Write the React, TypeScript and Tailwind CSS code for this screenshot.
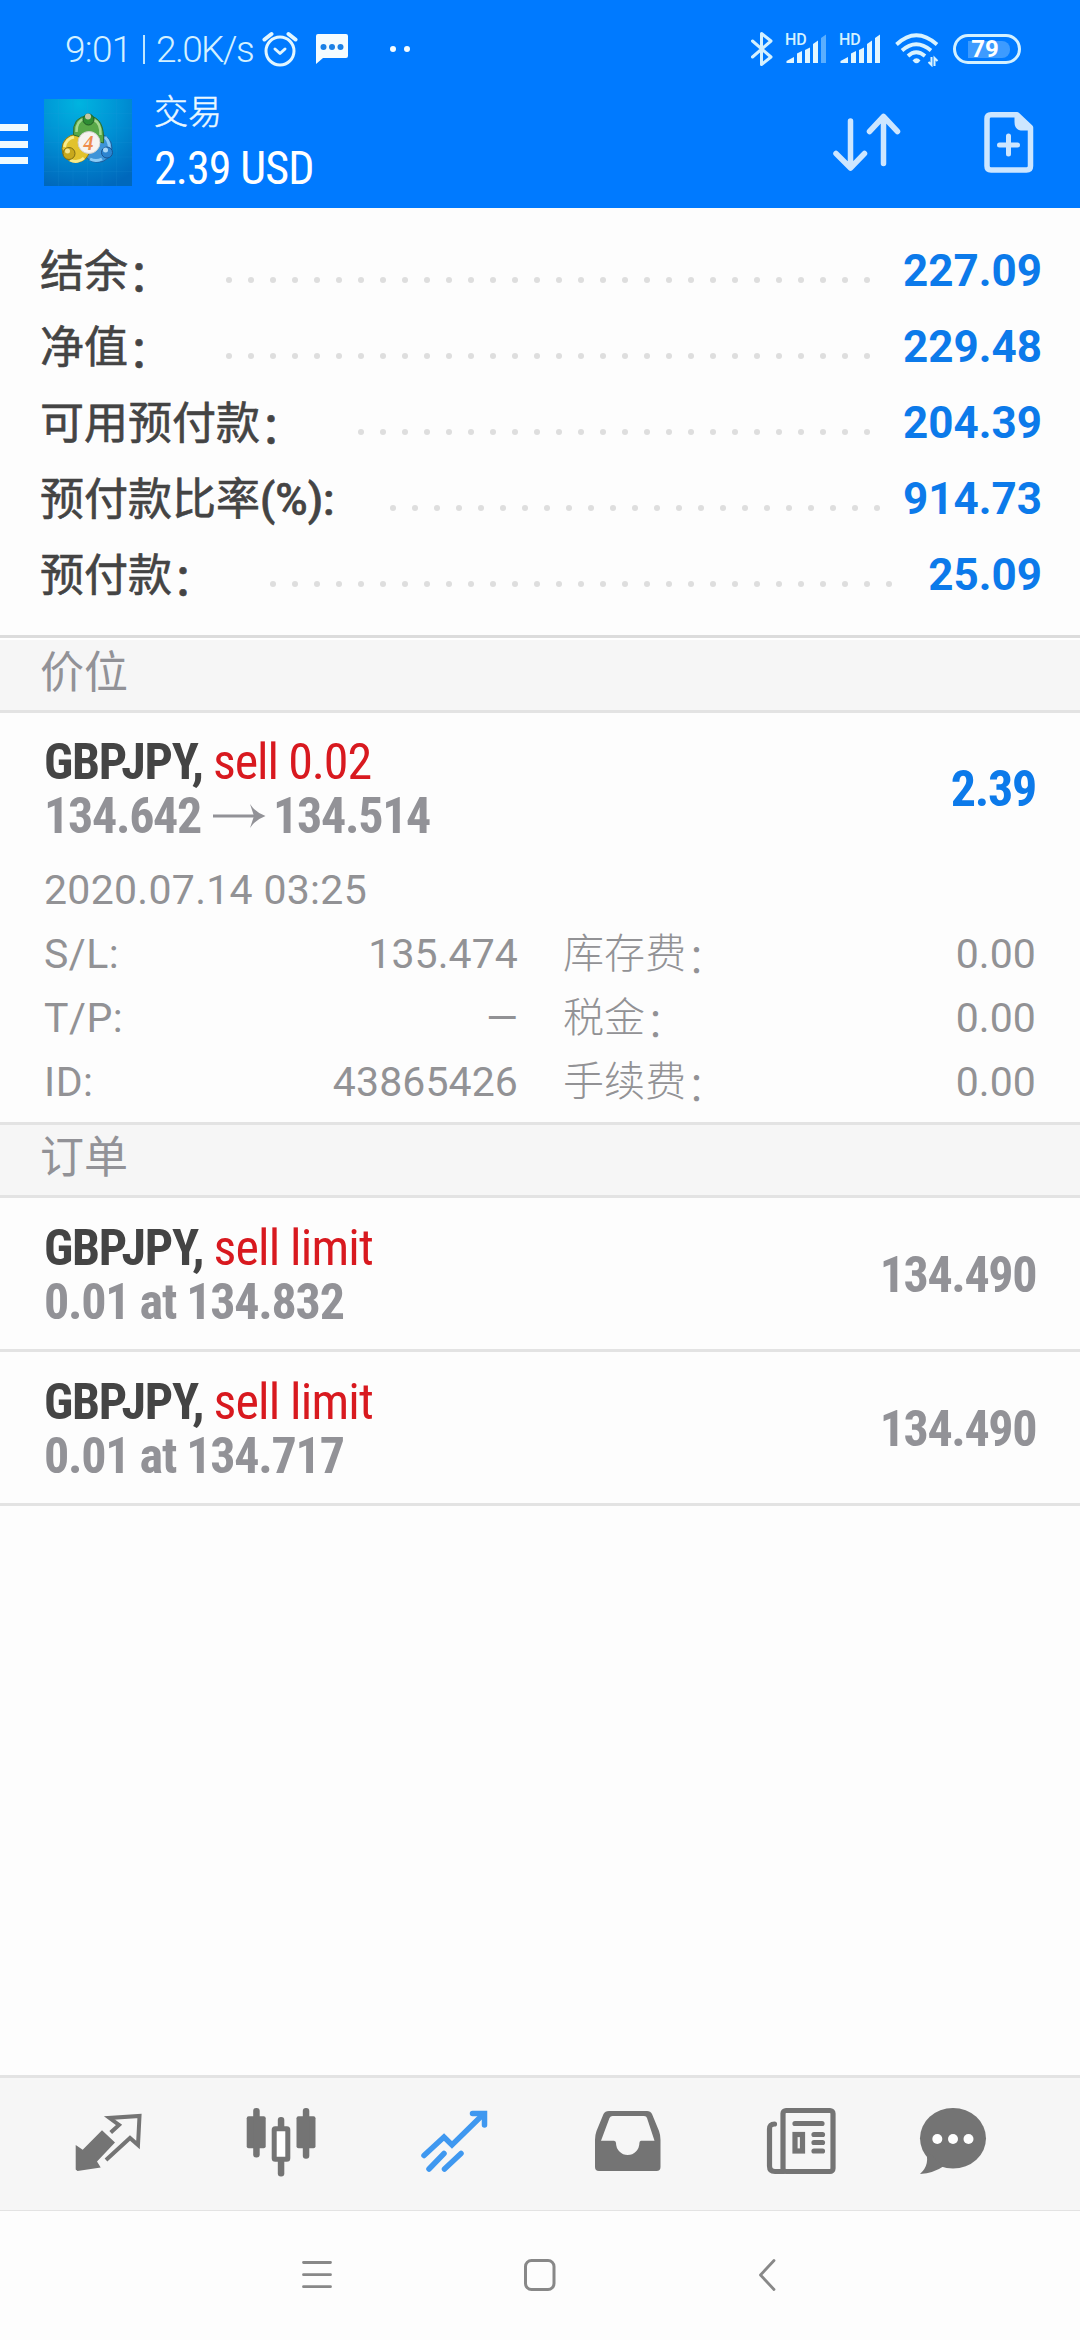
import React from "react";

const accountRows = [
  { label: "结余", value: "227.09", dots: 30, width: "w-[172px]" },
  { label: "净值", value: "229.48", dots: 30, width: "w-[172px]" },
  { label: "可用预付款", value: "204.39", dots: 24, width: "w-[172px]" },
  { label: "预付款比率", unit: "(%):", value: "914.73", dots: 23, width: "w-[162px]" },
  { label: "预付款", value: "25.09", dots: 29, width: "w-[150px]" },
];

const details = [
  { left: "S/L:", leftValue: "135.474", right: "库存费", rightValue: "0.00" },
  { left: "T/P:", leftValue: "—", right: "税金", rightValue: "0.00" },
  { left: "ID:", leftValue: "43865426", right: "手续费", rightValue: "0.00" },
];

const orders = [
  { symbol: "GBPJPY,", type: "sell limit", info: "0.01 at 134.832", price: "134.490" },
  { symbol: "GBPJPY,", type: "sell limit", info: "0.01 at 134.717", price: "134.490" },
];

function AlarmIcon() {
  return (
    <svg className="w-[36px] h-[36px] ml-[8px]" viewBox="0 0 36 36" fill="none" stroke="#e2f6ff" strokeWidth="3" strokeLinecap="round" strokeLinejoin="round">
      <circle cx="18" cy="20" r="14" />
      <path d="M2.500 8.500L9.500 3M33.500 8.500L26.500 3" strokeWidth="4" />
      <path d="M13 18l5 4.500l5-4.500" />
    </svg>
  );
}

function MessageIcon() {
  return (
    <svg className="w-[34px] h-[34px] ml-[17px]" viewBox="0 0 34 34">
      <path d="M3 2h28a2 2 0 0 1 2 2v20a2 2 0 0 1-2 2H8l-7 6V4a2 2 0 0 1 2-2z" fill="#f4fcff" />
      <g fill="#1a80e6">
        <circle cx="8.500" cy="15" r="3" />
        <circle cx="17" cy="15" r="3" />
        <circle cx="25.500" cy="15" r="3" />
      </g>
    </svg>
  );
}

function BluetoothIcon() {
  return (
    <svg className="w-[22px] h-[36px]" viewBox="0 0 22 36" fill="none" stroke="#d4f1ff" strokeWidth="3" strokeLinejoin="round" strokeLinecap="round">
      <path d="M1.500 10L20 26L10.500 33.500V2.500L20 10L1.500 26" />
    </svg>
  );
}

function SignalIcon({ last }: { last: string }) {
  return (
    <div className="relative w-[42px] h-[36px]">
      <span className="absolute left-0 top-[2px] text-[16px] leading-[14px] font-medium text-[#d4f1ff]">HD</span>
      <svg className="w-[42px] h-[36px]" viewBox="0 0 42 36" fill="#e2f6ff">
        <path d="M1.500 32V30L9 26V32z" />
        <path d="M12 32V22.500L17 20V32z" />
        <path d="M20 32V19L25 16.500V32z" />
        <path d="M28 32V13L33 9.500V32z" />
        <path d="M36 32V7L41 3.500V32z" fill={last} />
      </svg>
    </div>
  );
}

function WifiIcon() {
  return (
    <svg className="w-[44px] h-[36px] ml-[14px]" viewBox="0 0 44 36" fill="none" stroke="#d9f3ff" strokeWidth="3.800">
      <path d="M1.500 13.500Q21 -5 42 13.500" />
      <path d="M7 19.500Q21 7 36 19.500" />
      <path d="M13 25Q21 17.500 30 25" />
      <path d="M17.500 29.500Q21.500 25 25.500 29.500Q21.500 35 17.500 29.500z" fill="#d9f3ff" stroke="none" />
      <path d="M36.500 26V34L33.500 31M39.500 35V27L42.500 30" strokeWidth="2" />
    </svg>
  );
}

function StatusBar() {
  return (
    <div className="flex items-center h-[34px] pl-[65px] pr-[59px] text-[#d4f1ff]">
      <span className="w-[66px] text-[37px] leading-none font-light tracking-[-0.700px]">9:01</span>
      <div className="w-[2px] h-[29px] ml-[12px] bg-[#bfe6ff]"></div>
      <span className="w-[98px] ml-[11px] text-[37px] leading-none font-light tracking-[-1.600px] whitespace-nowrap">2.0K/s</span>
      <AlarmIcon />
      <MessageIcon />
      <div className="flex gap-[8px] ml-[41px]">
        <div className="w-[6px] h-[6px] rounded-full bg-[#f4fcff]"></div>
        <div className="w-[6px] h-[6px] rounded-full bg-[#f4fcff]"></div>
      </div>
      <div className="flex items-center ml-auto">
        <BluetoothIcon />
        <div className="flex gap-[12px] ml-[12px]">
          <SignalIcon last="#5aaeff" />
          <SignalIcon last="#e2f6ff" />
        </div>
        <WifiIcon />
        <div className="flex items-center justify-center w-[68px] h-[30px] ml-[14px] rounded-full border-[3px] border-[#d4f1ff]">
          <div className="flex items-center justify-center w-[42px] h-[17px] ml-[3px] rounded-r-[8px] bg-[#3d9bff]">
            <span className="pr-[7px] text-[24px] leading-none font-bold text-white">79</span>
          </div>
        </div>
      </div>
    </div>
  );
}

function AppLogo() {
  return (
    <svg className="w-[88px] h-[87px]" viewBox="0 0 88 87">
      <defs>
        <radialGradient id="logoBg" cx="0.4" cy="0.05" r="1">
          <stop offset="0" stopColor="#00b4e0" />
          <stop offset="0.5" stopColor="#0090d4" />
          <stop offset="1" stopColor="#0068bc" />
        </radialGradient>
      </defs>
      <rect width="88" height="87" fill="url(#logoBg)" />
      <path d="M0 14.500H88M0 29H88M0 43.500H88M0 58H88M0 72.500H88M14.500 0V87M29 0V87M43.500 0V87M58 0V87M72.500 0V87" stroke="#2a9fe0" strokeOpacity="0.12" strokeWidth="1" />
      <circle cx="53.500" cy="49" r="14.500" fill="#3d94d8" stroke="#1d5f9e" strokeWidth="1" />
      <path d="M61 38A14 14 0 0 1 64 54M58 60A13 13 0 0 1 46 60" fill="none" stroke="#8ccbf5" strokeWidth="3" />
      <circle cx="32" cy="49.500" r="14" fill="#e2c22c" stroke="#8a7a1c" strokeWidth="1" />
      <path d="M20.500 48A12 12 0 0 1 30 38M26 61A12 12 0 0 0 40 59" fill="none" stroke="#f8ec8c" strokeWidth="3" />
      <path d="M29.500 36Q28 17 44.500 17Q61 18 59.500 44L44 40z" fill="#58a848" stroke="#2c6c30" strokeWidth="1" />
      <path d="M32.500 33Q32 22 41 19.500M56.500 36Q57 24 50 21" fill="none" stroke="#a4d890" strokeWidth="2.500" />
      <circle cx="44.500" cy="20.500" r="5.500" fill="#2e8c34" stroke="#225c26" />
      <circle cx="44" cy="17.500" r="3" fill="#c4c8a4" />
      <circle cx="25" cy="54.500" r="6" fill="#c8a81c" stroke="#7c6c14" />
      <circle cx="23.500" cy="52" r="2.500" fill="#f4e48c" />
      <circle cx="63" cy="53.500" r="5.500" fill="#2c84d0" stroke="#1a5490" />
      <circle cx="61.500" cy="51" r="2.500" fill="#a8d8f8" />
      <circle cx="45" cy="43.500" r="11" fill="#f6f3f0" stroke="#d0d0cc" strokeWidth="1" />
      <text x="44.500" y="50.500" textAnchor="middle" fontSize="20" fill="#ee8c4c" className="font-['Liberation_Serif'] italic font-bold">4</text>
    </svg>
  );
}

function SortIcon() {
  return (
    <svg className="w-[68px] h-[62px]" viewBox="0 0 68 62" fill="none" stroke="#cde6ff" strokeWidth="5.500" strokeLinecap="round" strokeLinejoin="round">
      <path d="M17.500 10V57M3 42.500L17.500 57L31.500 42.500" />
      <path d="M50.500 52.500V5.500M36.500 20.500L50.500 5.500L64.500 20.500" />
    </svg>
  );
}

function NewOrderIcon() {
  return (
    <svg className="w-[50px] h-[61px]" viewBox="0 0 50 61" fill="none" stroke="#cde6ff" strokeWidth="5.500" strokeLinecap="round" strokeLinejoin="round">
      <path d="M7 2.800H33L46.500 15.500V54Q46.500 58 42.500 58H7Q3 58 3 54V6.800Q3 2.800 7 2.800z" />
      <path d="M32 4V10Q32 17 39 17H45z" fill="#cde6ff" strokeWidth="3" />
      <path d="M24.500 24V42M15.500 33H33.500" strokeWidth="5" />
    </svg>
  );
}

function Header() {
  return (
    <header className="h-[208px] pt-[32px] bg-[#007aff]">
      <StatusBar />
      <div className="flex items-start pt-[26px] pr-[46px]">
        <div className="flex flex-col gap-[9.500px] w-[28px] pt-[32px]">
          <div className="h-[7px] bg-[#eefaff]"></div>
          <div className="h-[7px] bg-[#eefaff]"></div>
          <div className="h-[7px] bg-[#eefaff]"></div>
        </div>
        <div className="pt-[7px] pl-[16px]">
          <AppLogo />
        </div>
        <div className="pl-[22px] text-[#eaf8ff]">
          <h1 className="text-[34px] leading-[40px] font-light [-webkit-text-stroke:0.5px]">交易</h1>
          <h2 className="font-['Roboto_Condensed'] text-[46px] leading-[72px] font-[450] tracking-[-0.900px] text-white">2.39 USD</h2>
        </div>
        <div className="flex items-center gap-[83px] ml-auto pt-[19px]">
          <SortIcon />
          <NewOrderIcon />
        </div>
      </div>
    </header>
  );
}

function AccountSummary() {
  return (
    <div className="pt-[25px] pb-[22px] pl-[40px] pr-[38px] border-b-[3px] border-[#dcdcdc] text-[44px] leading-none">
      {accountRows.map((row) => (
        <div key={row.label} className="flex items-center h-[76px]">
          <div className="flex-1 pt-[2px] text-[#444444] whitespace-nowrap [-webkit-text-stroke:0.6px]">
            {row.label}
            {row.unit ? <span className="font-medium">{row.unit}</span> : <span className="align-[-5px] leading-[0]">：</span>}
          </div>
          <div className="flex gap-[16px] pt-[18px]">
            {Array.from({ length: row.dots }, (_, i) => (
              <div key={i} className="w-[6px] h-[6px] rounded-full bg-[#dedede]"></div>
            ))}
          </div>
          <span className={"text-right font-bold text-[#0c7aea] " + row.width}>{row.value}</span>
        </div>
      ))}
    </div>
  );
}

function SectionTitle({ title }: { title: string }) {
  return (
    <div className="flex items-center h-[73px] pb-[4px] pl-[40px] bg-[#f6f6f6] border-b-[3px] border-[#e3e3e3] text-[44px] leading-none text-[#929297]">
      {title}
    </div>
  );
}

function Position() {
  return (
    <div className="pt-[22px] pb-[8px] pl-[44px] pr-[44px] border-b-[3px] border-[#e3e3e3]">
      <div className="flex items-center justify-between font-['Roboto_Condensed'] text-[50px] leading-[54px] font-bold tracking-[-1.300px]">
        <div>
          <h2 className="text-[#444444]">
            GBPJPY, <span className="font-normal tracking-[-1.100px] text-[#d8191f]">sell 0.02</span>
          </h2>
          <div className="flex items-center text-[#929297]">
            <span>134.642</span>
            <svg className="w-[54px] h-[26px] ml-[11px] mr-[7px]" viewBox="0 0 54 26">
              <path d="M1 13H44" stroke="#929297" strokeWidth="3" />
              <path d="M38 1Q43 9 53.500 13Q43 17 38 25L42 13z" fill="#929297" />
            </svg>
            <span>134.514</span>
          </div>
        </div>
        <h2 className="text-[#0c7aea]">2.39</h2>
      </div>
      <div className="pt-[15px] text-[41px] leading-[64px] font-[380] tracking-[0.100px] text-[#929295]">
        <p className="tracking-[0.300px]">2020.07.14 03:25</p>
        {details.map((item) => (
          <div key={item.left} className="flex">
            <span className="w-[100px] tracking-[0.500px]">{item.left}</span>
            <span className="w-[374px] text-right">{item.leftValue}</span>
            <span className="pl-[45px] font-light">
              {item.right}
              <span className="align-[-5px] leading-[0]">：</span>
            </span>
            <span className="ml-auto">{item.rightValue}</span>
          </div>
        ))}
      </div>
    </div>
  );
}

function Orders() {
  return (
    <div>
      {orders.map((order) => (
        <div key={order.info} className="flex items-center justify-between h-[154px] pt-[2px] pl-[44px] pr-[44px] border-b-[3px] border-[#e3e3e3] font-['Roboto_Condensed'] text-[50px] leading-[54px] font-bold tracking-[-1.250px] text-[#929297]">
          <div>
            <h2 className="text-[#444444]">
              {order.symbol} <span className="font-normal tracking-[-0.800px] text-[#d8191f]">{order.type}</span>
            </h2>
            <p>{order.info}</p>
          </div>
          <h2 className="tracking-[-1.400px]">{order.price}</h2>
        </div>
      ))}
    </div>
  );
}

function TabBar() {
  return (
    <div className="flex gap-[101px] h-[136px] pt-[28px] pl-[72px] bg-[#f6f6f6] border-t-[3px] border-b border-t-[#e3e3e3] border-b-[#e3e3e3]">
      {/* quotes */}
      <svg className="w-[72px] h-[72px]" viewBox="0 0 72 72">
        <path d="M30 24.300L43 36.500L25 55.500L28.700 61.500L5.500 65L3.700 63.500V39L10.700 43.700z" fill="#747474" />
        <path d="M38.700 26.500L47 19L37.500 12L67.500 10L66 39L58 32L34 54" fill="none" stroke="#747474" strokeWidth="4" />
      </svg>
      {/* chart */}
      <svg className="w-[72px] h-[72px]" viewBox="0 0 72 72" fill="#747474">
        <rect x="1.700" y="10.300" width="19" height="32" rx="2" />
        <rect x="8.200" y="2" width="6.500" height="49.500" rx="3" />
        <rect x="51.500" y="10.300" width="19" height="32" rx="2" />
        <rect x="57.800" y="2" width="6.500" height="50.700" rx="3" />
        <rect x="32.800" y="11" width="6.500" height="59.500" rx="3" />
        <rect x="29.200" y="22.800" width="13.600" height="30.400" rx="1" fill="#ffffff" stroke="#747474" strokeWidth="5" />
      </svg>
      {/* trade */}
      <svg className="w-[72px] h-[72px]" viewBox="0 0 72 72" fill="none" stroke="#3f98f0" strokeWidth="5.500" strokeLinecap="round">
        <path d="M6 49.500L26 31L34 39L65 8.500" />
        <path d="M54.500 7.500H66.500V19" />
        <path d="M11 63L26 47.500M26.500 63L43 47.500" />
      </svg>
      {/* history */}
      <svg className="w-[72px] h-[72px] ml-px" viewBox="0 0 72 72">
        <path fillRule="evenodd" fill="#747474" d="M17 5H55Q58.500 5 60 8L67 25Q68.500 29 68.500 34V61Q68.500 65 64.500 65H7Q3 65 3 61V34Q3 29 4.500 25L11.500 8Q13 5 17 5zM20.500 10Q18.500 10 17.500 12L9 34.700H22Q24 35 24 37A11.700 12 0 0 0 47.400 37Q47.400 35 49 34.700H62.500L55 12Q54.500 10 52 10z" />
      </svg>
      {/* news */}
      <svg className="w-[72px] h-[72px]" viewBox="0 0 72 72" fill="none" stroke="#747474" strokeWidth="5.200" strokeLinecap="round">
        <rect x="18" y="4.500" width="50" height="61" rx="3" />
        <path d="M9.500 18Q4.500 18 4.500 23V60Q4.500 65.500 10 65.500H18" />
        <path d="M30 17.500H57M49 28.500H57.500M49 36.500H57.500M49 45H57.500" />
        <rect x="30" y="28.500" width="7.500" height="16.500" />
      </svg>
      {/* chat */}
      <svg className="w-[72px] h-[72px] -ml-[21px]" viewBox="0 0 72 72" fill="#747474">
        <ellipse cx="36" cy="32.300" rx="33" ry="30.300" />
        <path d="M8 44Q14 58 3 68Q17 67 27 60z" />
        <g fill="#ffffff">
          <circle cx="20.300" cy="33" r="5" />
          <circle cx="36" cy="33" r="5" />
          <circle cx="51.500" cy="33" r="5" />
        </g>
      </svg>
    </div>
  );
}

function NavBar() {
  return (
    <div className="flex h-[129px] pt-[47px] pl-[301px]">
      <svg className="w-[32px] h-[34px]" viewBox="0 0 32 34" stroke="#888888" strokeWidth="2.800" strokeLinecap="round">
        <path d="M2.500 4.500H29.500M2.500 16.700H29.500M2.500 28.700H29.500" />
      </svg>
      <svg className="w-[34px] h-[34px] ml-[190px]" viewBox="0 0 34 34" fill="none" stroke="#888888" strokeWidth="3">
        <rect x="2.500" y="2.500" width="28.500" height="29" rx="6" />
      </svg>
      <svg className="w-[20px] h-[34px] ml-[200px]" viewBox="0 0 20 34" fill="none" stroke="#888888" strokeWidth="2.800" strokeLinecap="round" strokeLinejoin="round">
        <path d="M17 2.500L3.500 17L17 31.500" />
      </svg>
    </div>
  );
}

export default function App() {
  return (
    <div className="flex flex-col w-[1080px] h-[2340px] bg-[#fdfdfd] font-['Roboto','Noto_Sans_CJK_SC',sans-serif]">
      <Header />
      <main className="flex-1">
        <AccountSummary />
        <div className="h-[2px] bg-white"></div>
        <SectionTitle title="价位" />
        <Position />
        <SectionTitle title="订单" />
        <Orders />
      </main>
      <TabBar />
      <NavBar />
    </div>
  );
}
